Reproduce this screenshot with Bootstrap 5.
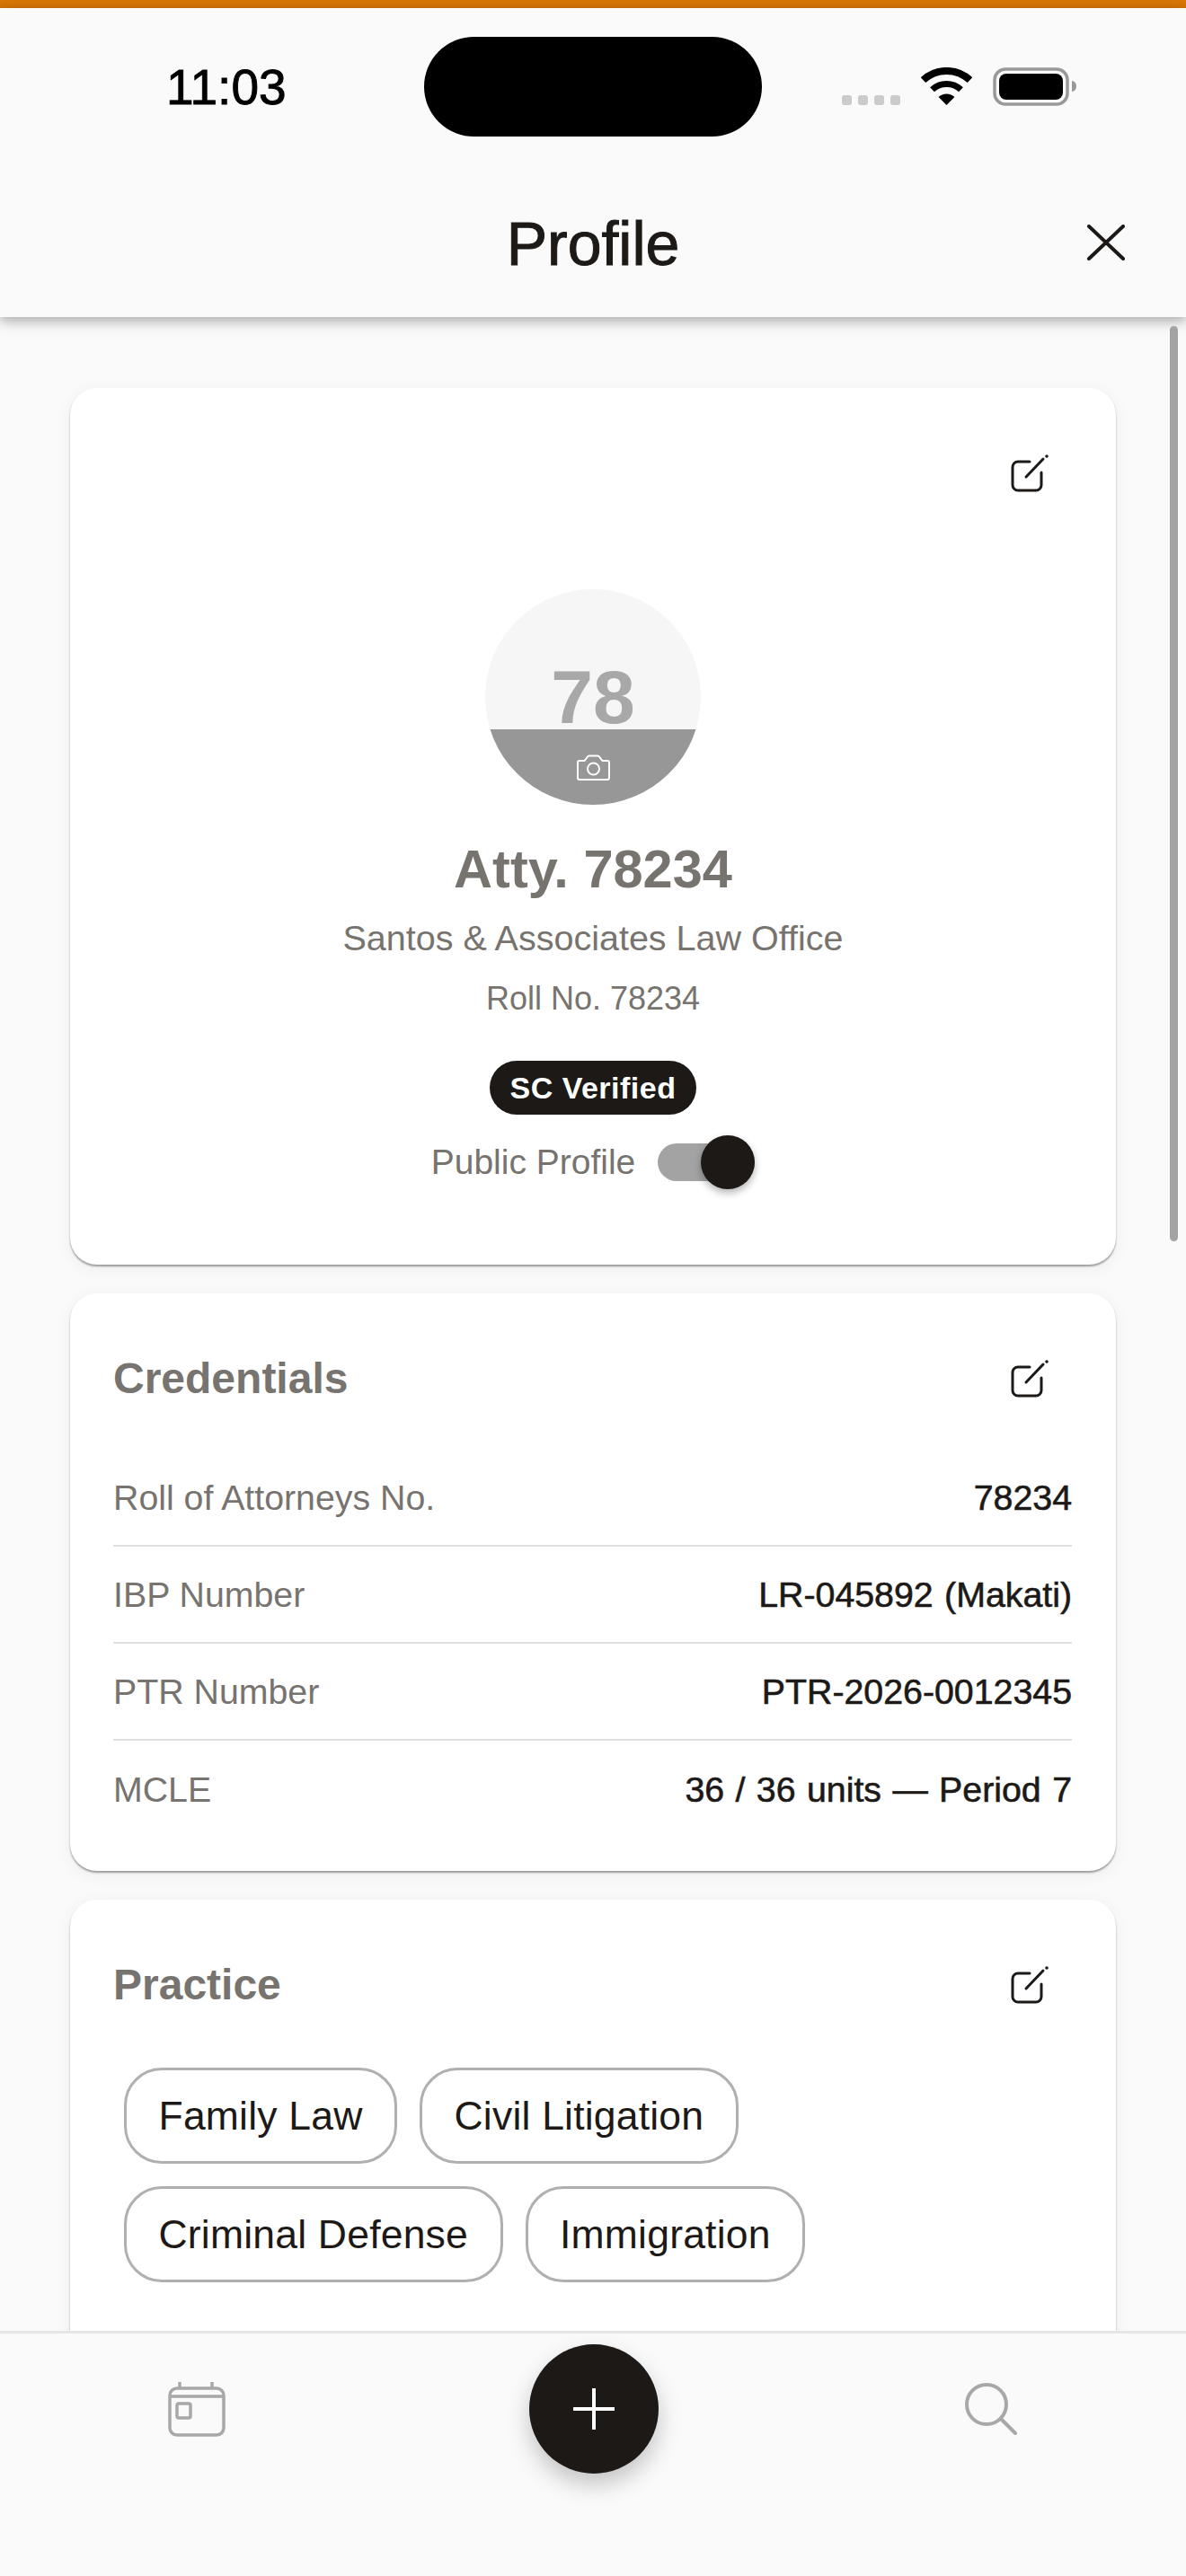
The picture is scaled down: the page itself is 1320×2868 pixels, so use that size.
<!DOCTYPE html>
<html lang="en">
<head>
    <meta charset="UTF-8">
    <title>Profile</title>
    <link href="https://cdn.jsdelivr.net/npm/bootstrap@5.3.2/dist/css/bootstrap.min.css" rel="stylesheet">
    <style>
        html, body { height: 100%; }
        body { background: #fafafa; font-family: "Liberation Sans", Arial, sans-serif; color: #1c1917; overflow: hidden; }
        .app-shell { height: 2868px; }
        .top-line { height: 9px; background: #d97706; }

        .app-head { height: 344px; background: #fafafa; box-shadow: 0 4px 14px rgba(0,0,0,.35); z-index: 2; }
        .status-row { padding-top: 32px; height: 143px; }
        .status-time { width: 472px; flex: none; font-size: 55px; line-height: 1; padding: 29px 0 0 185px; color: #000; -webkit-text-stroke: .9px #000; }
        .island { width: 376px; height: 111px; background: #000; border-radius: 56px; }
        .status-icons { width: 472px; flex: none; padding: 34px 0 0 89px; gap: 23px; }
        .sig-dots { gap: 7px; height: 42px; }
        .sig-dots span { width: 11px; height: 11px; border-radius: 3px; background: #cbcbcb; }
        .title-row { height: 201px; padding-top: 36px; }
        .title-side { width: 400px; flex: none; }
        .close-side { padding-right: 68px; margin-top: -2px; }
        .page-title { font-size: 68px; line-height: 1; margin: 0; font-weight: 400; -webkit-text-stroke: 1px #1c1917; }

        .app-main { min-height: 0; overflow: hidden; padding: 79px 78px 0; gap: 32px; }
        .bar-thumb { position: absolute; left: 1302px; top: 363px; width: 9px; height: 1019px; background: #a3a3a3; border-radius: 5px; z-index: 3; }
        .pro-card { border: 0; border-radius: 30px; background: #fff; box-shadow: 0 2px 2px rgba(0,0,0,.36), 0 4px 18px rgba(0,0,0,.06); flex-shrink: 0; }

        .hero-card { height: 976px; padding: 74px 75px 0; }
        .hero-edit { height: 150px; }
        .ava { width: 240px; height: 240px; background: #f6f6f6; }
        .ava-top { height: 156px; padding-bottom: 2px; font-size: 84px; line-height: .8; font-weight: 700; color: #a8a8a8; }
        .ava-band { height: 84px; background: #979797; padding-top: 28px; }
        .hero-name { font-size: 59.5px; line-height: 70px; font-weight: 700; color: #77736f; margin: 37px 0 17px; }
        .hero-firm { font-size: 39.5px; line-height: 48px; color: #77736f; margin-bottom: 22px; }
        .hero-roll { font-size: 36px; line-height: 44px; color: #77736f; margin-bottom: 47px; }
        .sc-pill { height: 60px; padding: 0 22px; background: #1c1917; color: #fff; border-radius: 30px; font-size: 34px; font-weight: 700; letter-spacing: .5px; }
        .public-row { height: 60px; margin-top: 23px; gap: 25px; font-size: 39px; color: #77736f; }
        .tog { position: relative; width: 108px; height: 42px; background: #a3a3a3; border-radius: 21px; }
        .tog-knob { position: absolute; right: 0; top: -9px; width: 60px; height: 60px; background: #1c1917; border-radius: 50%; box-shadow: 0 4px 8px rgba(0,0,0,.3); }

        .sect-card { padding: 65px 49px 37px 48px; }
        .sect-head { height: 60px; padding-right: 26px; }
        .sect-title { font-size: 48px; line-height: 60px; font-weight: 700; color: #77736f; margin: 0; }
        .cred-list { margin-top: 49px; }
        .cred-row { height: 108px; font-size: 39.3px; border-bottom: 2px solid #e0e0e0; }
        .cred-row:last-child { border-bottom: 0; }
        .cred-label { color: #77736f; }
        .cred-value { color: #1c1917; -webkit-text-stroke: .6px #1c1917; word-spacing: 1.5px; }

        .practice-card { padding-bottom: 100px; }
        .chip-wrap { margin: 62px 12px 0; gap: 25px 25px; }
        .area-chip { height: 107px; padding: 2px 35.5px 0; border: 3px solid #b0b0b0; border-radius: 42px; font-size: 44.5px; letter-spacing: .2px; color: #1c1917; }

        .app-foot { height: 273px; background: #fafafa; border-top: 3px solid #e7e5e4; padding: 12px 188px 0 187px; z-index: 2; flex-shrink: 0; }
        .foot-cal { margin-top: 41px; }
        .foot-search { margin-top: 43px; }
        .fab { width: 144px; height: 144px; background: #1c1917; border-radius: 50%; box-shadow: 0 12px 26px rgba(0,0,0,.22); }
    </style>
</head>
<body>

<div class="app-shell d-flex flex-column position-relative">
    <div class="top-line flex-shrink-0"></div>

    <header class="app-head flex-shrink-0 position-relative">
        <div class="status-row d-flex">
            <div class="status-time">11:03</div>
            <div class="island flex-shrink-0"></div>
            <div class="status-icons d-flex align-items-start">
                <div class="sig-dots d-flex align-items-end">
                    <span></span><span></span><span></span><span></span>
                </div>
                <svg width="57" height="42" viewBox="0 0 57 42">
                    <path d="M2.5 14.2A38 38 0 0 1 54.5 14.2" fill="none" stroke="#000" stroke-width="8"/>
                    <path d="M12.5 24.8A23.5 23.5 0 0 1 44.5 24.8" fill="none" stroke="#000" stroke-width="7"/>
                    <path d="M28.5 42L19.6 33.1A12.6 12.6 0 0 1 37.4 33.1Z" fill="#000"/>
                </svg>
                <svg width="93" height="43" viewBox="0 0 93 43">
                    <rect x="2" y="2" width="81" height="39" rx="12" fill="none" stroke="#999" stroke-width="3.5"/>
                    <rect x="7" y="7" width="71" height="29" rx="8" fill="#000"/>
                    <path d="M88 15a5 6 0 0 1 5 6a5 6 0 0 1-5 6Z" fill="#999"/>
                </svg>
            </div>
        </div>
        <div class="title-row d-flex align-items-center">
            <div class="title-side"></div>
            <h1 class="page-title flex-grow-1 text-center">Profile</h1>
            <div class="title-side close-side d-flex justify-content-end">
                <svg width="42" height="40" viewBox="0 0 42 40">
                    <path d="M2 2L40 38M40 2L2 38" fill="none" stroke="#1c1917" stroke-width="4" stroke-linecap="round"/>
                </svg>
            </div>
        </div>
    </header>

    <div class="bar-thumb"></div>

    <main class="app-main flex-grow-1 d-flex flex-column">
        <section class="card pro-card hero-card align-items-center">
            <div class="hero-edit w-100 d-flex justify-content-end">
                <svg width="42" height="42" viewBox="0 0 42 42">
                    <path d="M21 8H8a6 6 0 0 0-6 6V34a6 6 0 0 0 6 6H28a6 6 0 0 0 6-6V20" fill="none" stroke="#1c1917" stroke-width="3" stroke-linecap="round"/>
                    <path d="M17 25L36 5" fill="none" stroke="#1c1917" stroke-width="3" stroke-linecap="round"/>
                    <circle cx="40" cy="2" r="1.8" fill="#1c1917"/>
                </svg>
            </div>
            <div class="ava rounded-circle overflow-hidden flex-shrink-0">
                <div class="ava-top d-flex align-items-end justify-content-center">78</div>
                <div class="ava-band d-flex justify-content-center">
                    <svg width="37" height="29" viewBox="0 0 37 29">
                        <path d="M3 7H8.5L12 2.5A2 2 0 0 1 14 1.5H23A2 2 0 0 1 25 2.5L28.5 7H34A2 2 0 0 1 36 9V26A2 2 0 0 1 34 28H3A2 2 0 0 1 1 26V9A2 2 0 0 1 3 7Z" fill="none" stroke="#fff" stroke-width="2"/>
                        <circle cx="18.5" cy="16" r="6.5" fill="none" stroke="#fff" stroke-width="2"/>
                    </svg>
                </div>
            </div>
            <div class="hero-name">Atty. 78234</div>
            <div class="hero-firm">Santos &amp; Associates Law Office</div>
            <div class="hero-roll">Roll No. 78234</div>
            <span class="sc-pill d-inline-flex align-items-center">SC Verified</span>
            <div class="public-row d-flex align-items-center">
                <span>Public Profile</span>
                <span class="tog"><span class="tog-knob"></span></span>
            </div>
        </section>

        <section class="card pro-card sect-card">
            <div class="sect-head d-flex justify-content-between align-items-center">
                <h2 class="sect-title">Credentials</h2>
                <svg width="42" height="42" viewBox="0 0 42 42">
                    <path d="M21 8H8a6 6 0 0 0-6 6V34a6 6 0 0 0 6 6H28a6 6 0 0 0 6-6V20" fill="none" stroke="#1c1917" stroke-width="3" stroke-linecap="round"/>
                    <path d="M17 25L36 5" fill="none" stroke="#1c1917" stroke-width="3" stroke-linecap="round"/>
                    <circle cx="40" cy="2" r="1.8" fill="#1c1917"/>
                </svg>
            </div>
            <div class="cred-list">
                <div class="cred-row d-flex justify-content-between align-items-center">
                    <span class="cred-label">Roll of Attorneys No.</span><span class="cred-value">78234</span>
                </div>
                <div class="cred-row d-flex justify-content-between align-items-center">
                    <span class="cred-label">IBP Number</span><span class="cred-value">LR-045892 (Makati)</span>
                </div>
                <div class="cred-row d-flex justify-content-between align-items-center">
                    <span class="cred-label">PTR Number</span><span class="cred-value">PTR-2026-0012345</span>
                </div>
                <div class="cred-row d-flex justify-content-between align-items-center">
                    <span class="cred-label">MCLE</span><span class="cred-value">36 / 36 units — Period 7</span>
                </div>
            </div>
        </section>

        <section class="card pro-card sect-card practice-card">
            <div class="sect-head d-flex justify-content-between align-items-center">
                <h2 class="sect-title">Practice</h2>
                <svg width="42" height="42" viewBox="0 0 42 42">
                    <path d="M21 8H8a6 6 0 0 0-6 6V34a6 6 0 0 0 6 6H28a6 6 0 0 0 6-6V20" fill="none" stroke="#1c1917" stroke-width="3" stroke-linecap="round"/>
                    <path d="M17 25L36 5" fill="none" stroke="#1c1917" stroke-width="3" stroke-linecap="round"/>
                    <circle cx="40" cy="2" r="1.8" fill="#1c1917"/>
                </svg>
            </div>
            <div class="chip-wrap d-flex flex-wrap">
                <span class="area-chip d-inline-flex align-items-center">Family Law</span>
                <span class="area-chip d-inline-flex align-items-center">Civil Litigation</span>
                <span class="area-chip d-inline-flex align-items-center">Criminal Defense</span>
                <span class="area-chip d-inline-flex align-items-center">Immigration</span>
            </div>
        </section>
    </main>

    <nav class="app-foot d-flex justify-content-between align-items-start">
        <svg class="foot-cal" width="64" height="62" viewBox="0 0 64 62">
            <rect x="2" y="8" width="60" height="52" rx="8" fill="none" stroke="#a8a8a8" stroke-width="3.5"/>
            <path d="M2 17H62M13 1V8M49 1V8" fill="none" stroke="#a8a8a8" stroke-width="3.5"/>
            <rect x="10" y="25" width="15" height="16" rx="2" fill="none" stroke="#a8a8a8" stroke-width="3.5"/>
        </svg>
        <div class="fab d-flex align-items-center justify-content-center me-1">
            <svg width="46" height="46" viewBox="0 0 46 46">
                <path d="M23 1V45M1 23H45" fill="none" stroke="#fff" stroke-width="4" stroke-linecap="round"/>
            </svg>
        </div>
        <svg class="foot-search" width="58" height="58" viewBox="0 0 58 58">
            <circle cx="24" cy="24" r="22" fill="none" stroke="#a8a8a8" stroke-width="4"/>
            <path d="M40 40L56 56" fill="none" stroke="#a8a8a8" stroke-width="4" stroke-linecap="round"/>
        </svg>
    </nav>
</div>

<script src="https://cdn.jsdelivr.net/npm/bootstrap@5.3.2/dist/js/bootstrap.bundle.min.js"></script>
</body>
</html>
